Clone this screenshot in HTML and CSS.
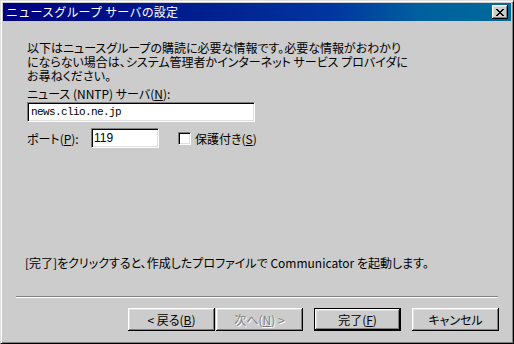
FILE: index.html
```html
<!DOCTYPE html>
<html lang="ja">
<head>
    <meta charset="UTF-8">
    <title>ニュースグループ サーバの設定</title>
    <link rel="stylesheet" href="styles.css">
</head>
<body>
    <div class="window">
        <div class="titlebar">
            <span class="title">ニュースグループ サーバの設定</span>
            <button class="close-btn" aria-label="閉じる">
                <svg width="8" height="7" viewBox="0 0 8 7">
                    <path d="M0 0h2v1h-2zM6 0h2v1h-2zM1 1h2v1h-2zM5 1h2v1h-2zM2 2h4v1h-4zM3 3h2v1h-2zM2 4h4v1h-4zM1 5h2v1h-2zM5 5h2v1h-2zM0 6h2v1h-2zM6 6h2v1h-2z" fill="#000"/>
                </svg>
            </button>
        </div>

        <div class="content">
            <p class="intro">
                以下はニュースグループの購読に必要な情報です。必要な情報がおわかり<br>
                にならない場合は、システム管理者かインターネット サービス プロバイダに<br>
                お尋ねください。
            </p>

            <label class="field-label">ニュース (NNTP) サーバ(<u>N</u>):</label>
            <div class="textbox server-box">news.clio.ne.jp</div>

            <div class="port-row">
                <label class="port-label">ポート(<u>P</u>):</label>
                <div class="textbox port-box">119</div>
                <span class="checkbox"></span>
                <span class="check-label">保護付き(<u>S</u>)</span>
            </div>

            <p class="finish-note">[完了]をクリックすると、作成したプロファイルで Communicator を起動します。</p>
        </div>

        <div class="separator"></div>

        <div class="buttons">
            <button class="btn">&lt; 戻る(<u>B</u>)</button>
            <button class="btn disabled">次へ(<u>N</u>) &gt;</button>
            <button class="btn default">完了(<u>F</u>)</button>
            <button class="btn">キャンセル</button>
        </div>
    </div>
</body>
</html>
```

FILE: styles.css
```css
body {
    margin: 0;
    font-family: 'Noto Sans CJK JP', sans-serif;
    font-size: 12px;
    color: #000;
    background: #c0c0c0;
}

.window {
    width: 514px;
    height: 344px;
    box-sizing: border-box;
    background: #cccccc;
    border: 1px solid;
    border-color: #dfdfdf #000 #000 #dfdfdf;
    box-shadow: inset 1px 1px #fff, inset -1px -1px #808080;
    padding: 2px;
    display: flex;
    flex-direction: column;
}

.titlebar {
    height: 18px;
    display: flex;
    align-items: center;
    justify-content: space-between;
    padding: 0 3px;
    background: linear-gradient(to right, #000080 0%, #00208f 40%, #0036a0 65%, #00609e 82%, #006a9a 100%);
}

.title {
    color: #fff;
    font-size: 12px;
    line-height: 14px;
    letter-spacing: 0.2px;
}

.close-btn {
    width: 16px;
    height: 14px;
    padding: 0;
    box-sizing: border-box;
    background: #cccccc;
    border: 0;
    box-shadow: inset -1px -1px #000, inset 1px 1px #fff, inset -2px -2px #808080, inset 2px 2px #dfdfdf;
    display: flex;
    align-items: center;
    justify-content: center;
}

.close-btn svg {
    margin-left: -1px;
    display: block;
}

.content {
    padding: 20px 0 0 24px;
    height: 256px;
    box-sizing: border-box;
}

.intro {
    margin: 0;
    line-height: 14px;
    font-feature-settings: "palt";
}

.field-label {
    display: block;
    margin-top: 4px;
    line-height: 14px;
    font-feature-settings: "palt";
}

.textbox {
    background: #fff;
    box-sizing: border-box;
    height: 20px;
    padding: 2px 3px;
    border: 1px solid;
    border-color: #808080 #fff #fff #808080;
    box-shadow: inset 1px 1px #000, inset -1px -1px #dfdfdf;
    line-height: 15px;
}

.server-box {
    margin-top: 1px;
    width: 228px;
    font-family: 'Liberation Mono', monospace;
    font-size: 11px;
    letter-spacing: -0.6px;
}

.port-row {
    margin-top: 6px;
    display: flex;
    align-items: center;
    height: 20px;
}

.port-label {
    width: 64px;
    font-feature-settings: "palt";
}

.port-box {
    width: 68px;
    padding-left: 2px;
    font-family: 'Liberation Sans', sans-serif;
}

.checkbox {
    width: 13px;
    height: 13px;
    box-sizing: border-box;
    margin-left: 19px;
    background: #fff;
    border: 1px solid;
    border-color: #808080 #fff #fff #808080;
    box-shadow: inset 1px 1px #000, inset -1px -1px #dfdfdf;
}

.check-label {
    margin-left: 4px;
    font-feature-settings: "palt";
}

.finish-note {
    margin: 108px 0 0 -2px;
    line-height: 14px;
    font-feature-settings: "palt";
}

.separator {
    margin: 19px 13px 0 13px;
    border-top: 1px solid #808080;
    border-bottom: 1px solid #fff;
    height: 0;
}

.buttons {
    display: flex;
    justify-content: flex-end;
    padding: 10px 12px 0 0;
    gap: 11px;
}

.btn {
    width: 87px;
    height: 23px;
    padding: 0;
    font-family: 'Noto Sans CJK JP', sans-serif;
    font-size: 12px;
    color: #000;
    background: #cccccc;
    border: 0;
    box-shadow: inset -1px -1px #000, inset 1px 1px #fff, inset -2px -2px #808080, inset 2px 2px #dfdfdf;
    font-feature-settings: "palt";
}

.btn:nth-child(1) {
    margin-right: -10px;
}

.btn.disabled {
    color: #808080;
    text-shadow: 1px 1px #fff;
}

.btn.default {
    border: 1px solid #000;
    box-sizing: border-box;
}
```
